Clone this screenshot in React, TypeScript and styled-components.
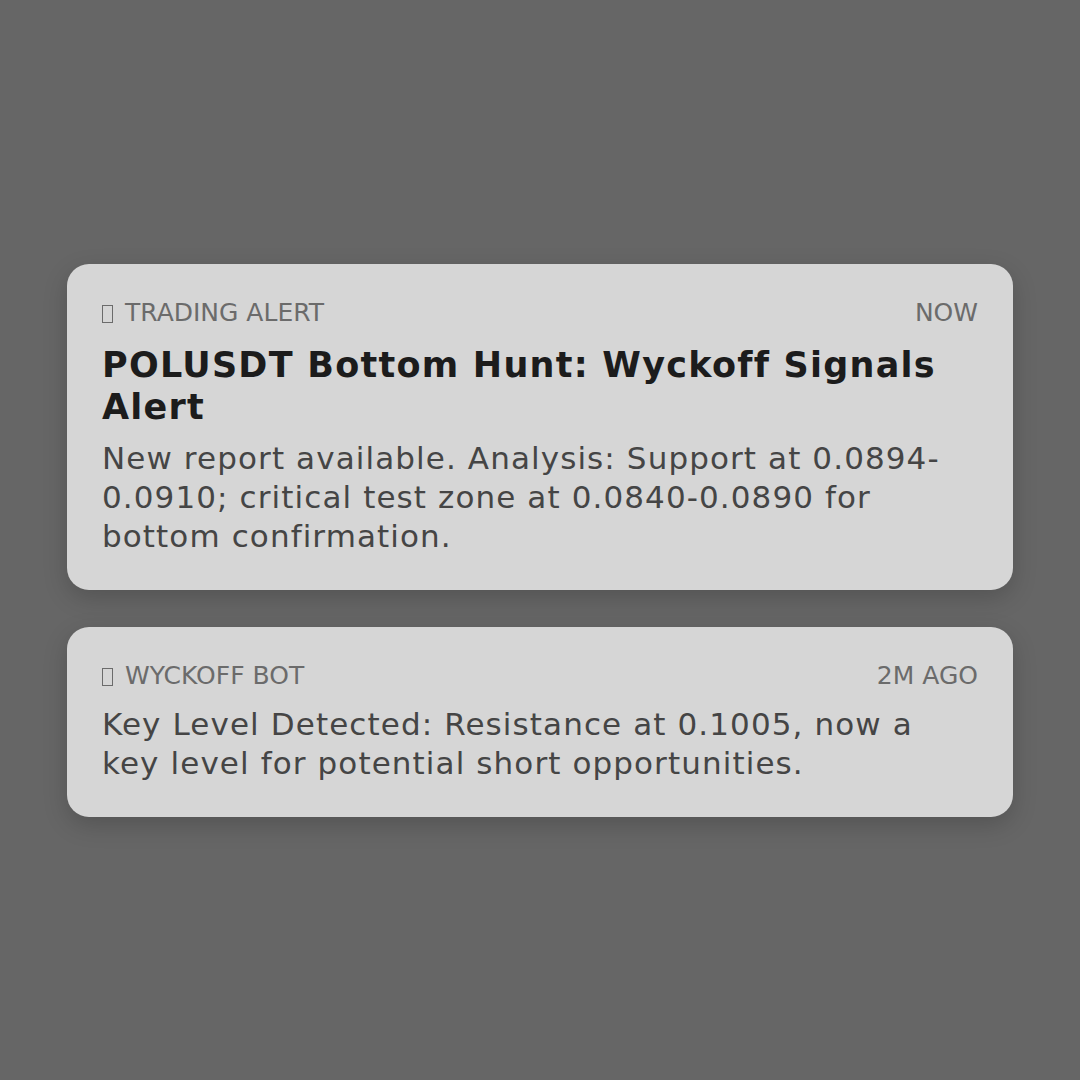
import React from "react";
import styled, { createGlobalStyle } from "styled-components";

const Global = createGlobalStyle`
  html, body {
    margin: 0;
    padding: 0;
    background: #666666;
  }
  body {
    font-family: "DejaVu Sans", sans-serif;
  }
`;

const Page = styled.div`
  width: 1080px;
  height: 1080px;
  box-sizing: border-box;
  padding: 0 67px;
  display: flex;
  flex-direction: column;
  justify-content: center;
  gap: 37px;
  background: #666666;
`;

const Card = styled.section`
  background: #d6d6d6;
  border-radius: 22px;
  padding: 33px 35px 34px;
  box-shadow: 0 8px 24px rgba(0, 0, 0, 0.18);
  display: flex;
  flex-direction: column;
`;

const Header = styled.div`
  display: flex;
  justify-content: space-between;
  align-items: center;
  font-family: "DejaVu Sans", sans-serif;
  font-size: 25px;
  line-height: 32px;
  color: #6b6b6b;
  text-transform: uppercase;
`;

const Source = styled.span`
  display: flex;
  align-items: center;
  gap: 12px;
`;

const Tofu = styled.span`
  display: inline-block;
  box-sizing: border-box;
  width: 11px;
  height: 18px;
  border: 1.5px solid #6b6b6b;
  margin-top: 3px;
`;

const Title = styled.h2`
  margin: 15px 0 0;
  font-family: "DejaVu Sans", sans-serif;
  font-weight: 700;
  font-size: 35px;
  line-height: 42px;
  letter-spacing: 1.25px;
  color: #1c1c1c;
`;

const Body = styled.p<{ $first?: boolean }>`
  margin: ${(p) => (p.$first ? "13px" : "11px")} 0 0;
  font-family: "DejaVu Sans", sans-serif;
  font-size: 31px;
  line-height: 39px;
  letter-spacing: 1.1px;
  color: #454545;
`;

type Note = {
  source: string;
  time: string;
  title?: string;
  body: string;
};

const notes: Note[] = [
  {
    source: "Trading Alert",
    time: "Now",
    title: "POLUSDT Bottom Hunt: Wyckoff Signals Alert",
    body: "New report available. Analysis: Support at 0.0894-0.0910; critical test zone at 0.0840-0.0890 for bottom confirmation.",
  },
  {
    source: "Wyckoff Bot",
    time: "2m ago",
    body: "Key Level Detected: Resistance at 0.1005, now a key level for potential short opportunities.",
  },
];

export default function App() {
  return (
    <>
      <Global />
      <Page>
        {notes.map((n) => (
          <Card key={n.source}>
            <Header>
              <Source>
                <Tofu />
                {n.source}
              </Source>
              <span>{n.time}</span>
            </Header>
            {n.title && <Title>{n.title}</Title>}
            <Body $first={!n.title}>{n.body}</Body>
          </Card>
        ))}
      </Page>
    </>
  );
}
